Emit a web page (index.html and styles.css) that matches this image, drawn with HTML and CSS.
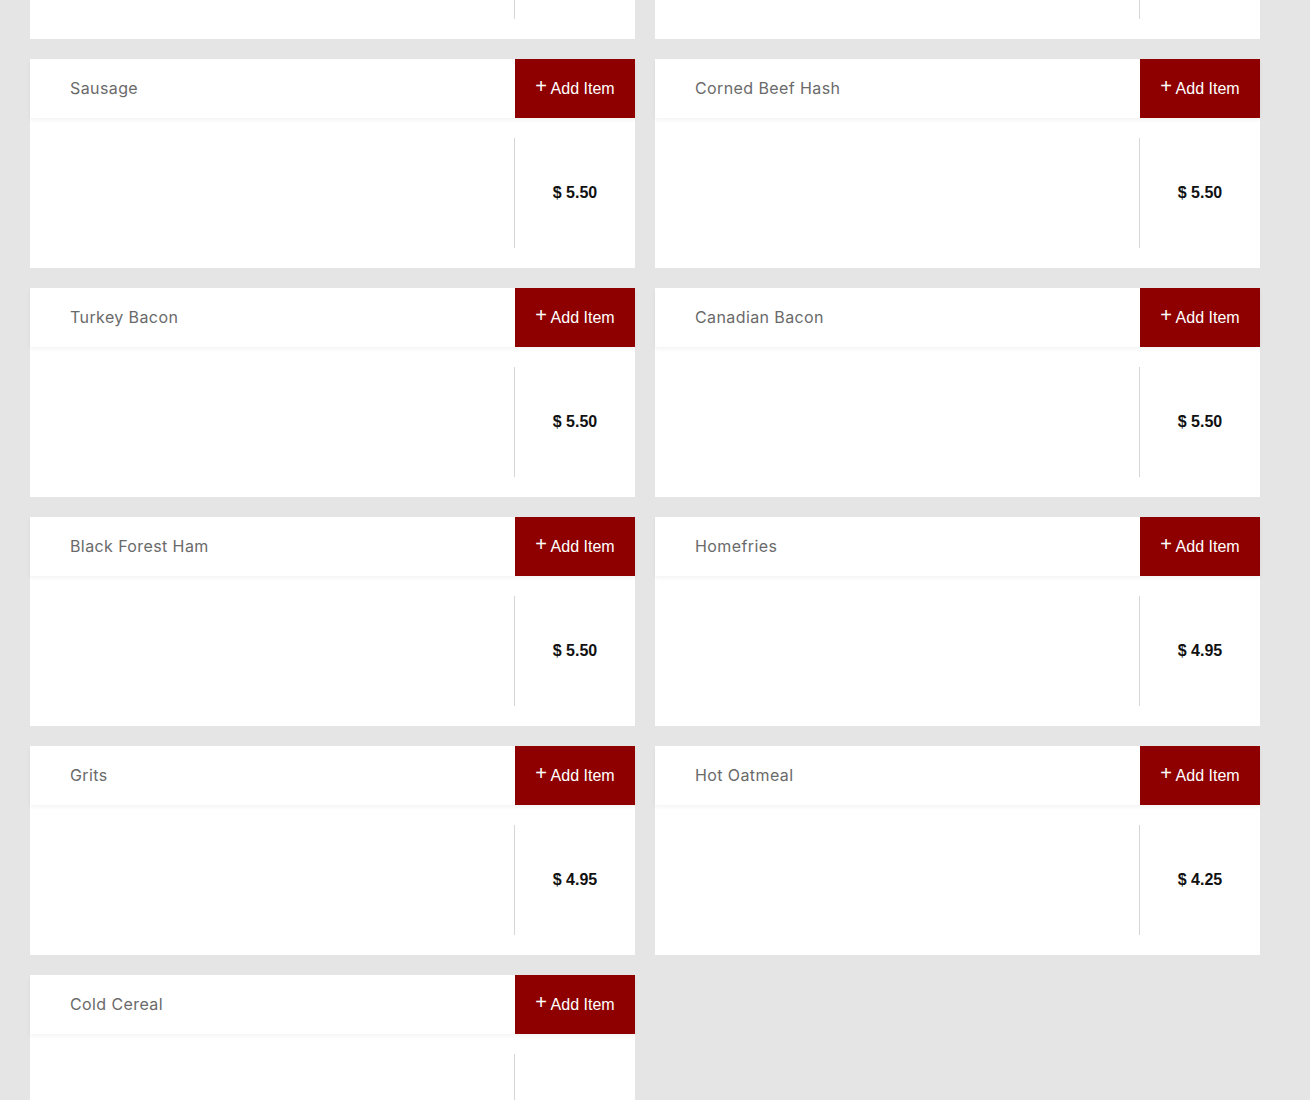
FILE: index.html
```html
<!DOCTYPE html>
<html>
<head>
<meta charset="utf-8">
<link rel="stylesheet" href="styles.css">
</head>
<body>
<div class="menu">
  <div class="card"><div class="head"><div class="name">Bacon</div><div class="add"><span class="plus">+</span> Add Item</div></div><div class="body"><div class="desc"></div><div class="price">$ 5.50</div></div></div>
  <div class="card"><div class="head"><div class="name">Ham</div><div class="add"><span class="plus">+</span> Add Item</div></div><div class="body"><div class="desc"></div><div class="price">$ 5.50</div></div></div>

  <div class="card"><div class="head"><div class="name">Sausage</div><div class="add"><span class="plus">+</span> Add Item</div></div><div class="body"><div class="desc"></div><div class="price">$ 5.50</div></div></div>
  <div class="card"><div class="head"><div class="name">Corned Beef Hash</div><div class="add"><span class="plus">+</span> Add Item</div></div><div class="body"><div class="desc"></div><div class="price">$ 5.50</div></div></div>

  <div class="card"><div class="head"><div class="name">Turkey Bacon</div><div class="add"><span class="plus">+</span> Add Item</div></div><div class="body"><div class="desc"></div><div class="price">$ 5.50</div></div></div>
  <div class="card"><div class="head"><div class="name">Canadian Bacon</div><div class="add"><span class="plus">+</span> Add Item</div></div><div class="body"><div class="desc"></div><div class="price">$ 5.50</div></div></div>

  <div class="card"><div class="head"><div class="name">Black Forest Ham</div><div class="add"><span class="plus">+</span> Add Item</div></div><div class="body"><div class="desc"></div><div class="price">$ 5.50</div></div></div>
  <div class="card"><div class="head"><div class="name">Homefries</div><div class="add"><span class="plus">+</span> Add Item</div></div><div class="body"><div class="desc"></div><div class="price">$ 4.95</div></div></div>

  <div class="card"><div class="head"><div class="name">Grits</div><div class="add"><span class="plus">+</span> Add Item</div></div><div class="body"><div class="desc"></div><div class="price">$ 4.95</div></div></div>
  <div class="card"><div class="head"><div class="name">Hot Oatmeal</div><div class="add"><span class="plus">+</span> Add Item</div></div><div class="body"><div class="desc"></div><div class="price">$ 4.25</div></div></div>

  <div class="card"><div class="head"><div class="name">Cold Cereal</div><div class="add"><span class="plus">+</span> Add Item</div></div><div class="body"><div class="desc"></div><div class="price">$ 4.25</div></div></div>
</div>
</body>
</html>
```
FILE: styles.css
```css
html, body {
  margin: 0;
  padding: 0;
  background: #e5e5e5;
  height: 1100px;
  overflow: hidden;
}
.menu {
  display: grid;
  grid-template-columns: 605px 605px;
  column-gap: 20px;
  row-gap: 20px;
  padding-left: 30px;
  margin-top: -170px;
}
.card {
  background: #fff;
  display: flex;
  flex-direction: column;
}
.head {
  display: flex;
  height: 59px;
  box-shadow: 0 2px 4px rgba(0, 0, 0, 0.05);
  position: relative;
  z-index: 1;
}
.name {
  flex: 1;
  display: flex;
  align-items: center;
  padding-left: 40px;
  padding-bottom: 1px;
  font-family: Inter, "Open Sans", sans-serif;
  font-size: 16px;
  font-weight: 400;
  letter-spacing: 0.4px;
  color: #6a6a6a;
}
.add {
  width: 120px;
  background: #8e0000;
  color: #fff;
  display: flex;
  align-items: center;
  justify-content: center;
  font-family: "Liberation Sans", Arial, sans-serif;
  font-size: 16px;
  white-space: pre;
}
.plus {
  font-size: 20px;
  position: relative;
  top: -2px;
}
.body {
  display: flex;
  height: 150px;
  padding: 20px 0;
  box-sizing: border-box;
}
.desc {
  flex: 1;
  border-right: 1px solid #d6d6d6;
}
.price {
  width: 120px;
  display: flex;
  align-items: center;
  justify-content: center;
  font-family: "Liberation Sans", Arial, sans-serif;
  font-weight: bold;
  font-size: 16px;
  color: #111;
}
```
